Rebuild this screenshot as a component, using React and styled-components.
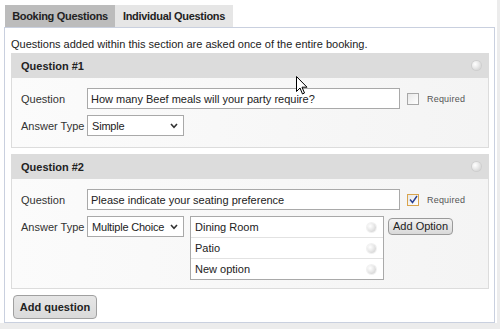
import styled, { createGlobalStyle } from 'styled-components';

const GlobalStyle = createGlobalStyle`
  html, body { margin: 0; padding: 0; background: #ececec; }
  body { font-family: 'Liberation Sans', Arial, sans-serif; font-size: 11px; color: #222; }
`;

const Frame = styled.div`
  position: relative;
  width: 497px;
  height: 323px;
  background: #fff;
  padding: 5px 0 0 4px;
  box-sizing: border-box;
`;

const Tabs = styled.div`
  display: flex;
  margin-left: 1px;
  height: 22px;
`;

const Tab = styled.div`
  display: flex;
  align-items: center;
  justify-content: center;
  width: ${p => p.$w}px;
  font-weight: bold;
  font-size: 11px;
  letter-spacing: -0.3px;
  white-space: nowrap;
  color: #222;
  background: ${p => (p.$active ? '#bcbcbc' : '#e6e6e6')};
`;

const Panel = styled.div`
  width: 491px;
  height: 296px;
  box-sizing: border-box;
  border: 1px solid #c9d0df;
  padding: 0 5px 0 6px;
  display: flex;
  flex-direction: column;
`;

const Intro = styled.p`
  margin: 0;
  padding-top: 9px;
  height: 25px;
  box-sizing: border-box;
  line-height: 14px;
  font-size: 11px;
  white-space: nowrap;
  color: #222;
`;

const Block = styled.div`
  width: 478px;
  margin-bottom: 6px;
`;

const BlockHead = styled.div`
  height: 25px;
  background: #dcdcdc;
  display: flex;
  align-items: center;
  justify-content: space-between;
  padding: 0 8px 0 10px;
  font-weight: bold;
  font-size: 11px;
`;

const Knob = styled.span`
  display: inline-block;
  width: 9px;
  height: 9px;
  border-radius: 50%;
  background: radial-gradient(circle at 35% 35%, #ffffff 0%, #e9e9e9 45%, #c9c9c9 100%);
  box-shadow: 0 0 0 1px rgba(0, 0, 0, 0.06);
`;

const BlockBody = styled.div`
  border: 1px solid #dcdcdc;
  border-top: none;
  background: linear-gradient(90deg, #fbfbfb, #f4f4f4);
  padding: 10px 0 ${p => p.$pb}px 9px;
  display: flex;
  flex-direction: column;
  gap: 6px;
`;

const Row = styled.div`
  display: flex;
  align-items: ${p => (p.$top ? 'flex-start' : 'center')};
`;

const Label = styled.div`
  width: 66px;
  padding-top: ${p => (p.$top ? '5px' : '0')};
  font-size: 11px;
  white-space: nowrap;
  color: #333;
  flex-shrink: 0;
`;

const TextBox = styled.div`
  width: 313px;
  height: 21px;
  box-sizing: border-box;
  border: 1px solid #a9a9a9;
  background: #fff;
  padding: 0 3px;
  display: flex;
  align-items: center;
  font-size: 11px;
  white-space: nowrap;
  color: #222;
`;

const Check = styled.span`
  width: 12px;
  height: 12px;
  box-sizing: border-box;
  margin-left: 7px;
  border: 1px solid ${p => (p.$on ? '#d9a44c' : '#a8a8a8')};
  background: linear-gradient(135deg, #e8e8e8, #ffffff);
  display: flex;
  align-items: center;
  justify-content: center;
`;

const Req = styled.span`
  margin-left: 8px;
  font-size: 9px;
  color: #555;
  letter-spacing: 0.2px;
`;

const Select = styled.div`
  width: 97px;
  height: 21px;
  box-sizing: border-box;
  border: 1px solid #a9a9a9;
  background: #fff;
  display: flex;
  align-items: center;
  justify-content: space-between;
  padding: 0 5px 0 4px;
  font-size: 11px;
  letter-spacing: -0.2px;
  white-space: nowrap;
  color: #222;
  flex-shrink: 0;
`;

const Options = styled.div`
  margin-left: 6px;
  width: 194px;
  box-sizing: border-box;
  border: 1px solid #a9a9a9;
  background: #fff;
`;

const Option = styled.div`
  height: 20px;
  display: flex;
  align-items: center;
  justify-content: space-between;
  padding: 0 7px 0 4px;
  font-size: 11px;
  border-top: ${p => (p.$first ? 'none' : '1px solid #e2e2e2')};
`;

const SmallButton = styled.button`
  margin: 2px 0 0 4px;
  height: 17px;
  padding: 0 4px;
  font-family: 'Liberation Sans', Arial, sans-serif;
  font-size: 11px;
  white-space: nowrap;
  color: #222;
  border: 1px solid #9a9a9a;
  border-radius: 4px;
  background: linear-gradient(#f2f2f2, #d9d9d9);
  line-height: 15px;
`;

const AddButton = styled.button`
  margin: 0 0 0 2px;
  width: 84px;
  height: 24px;
  padding: 0;
  font-family: 'Liberation Sans', Arial, sans-serif;
  font-weight: bold;
  font-size: 11px;
  white-space: nowrap;
  color: #222;
  border: 1px solid #a0a0a0;
  border-radius: 4px;
  background: linear-gradient(#e6e6e6, #dadada);
`;

const Cursor = styled.svg`
  position: absolute;
  left: 296px;
  top: 76px;
`;

const Chevron = () => (
  <svg width="8" height="6" viewBox="0 0 8 6">
    <path d="M1 1 L4 4.3 L7 1" fill="none" stroke="#333" strokeWidth="1.6" />
  </svg>
);

const Tick = () => (
  <svg width="9" height="9" viewBox="0 0 9 9">
    <path d="M1 4.5 L3.5 7.5 L8 1" fill="none" stroke="#2a3f8f" strokeWidth="1.4" />
  </svg>
);

const App = () => (
  <>
    <GlobalStyle />
    <Frame>
      <Tabs>
        <Tab $active $w={110}>Booking Questions</Tab>
        <Tab $w={118}>Individual Questions</Tab>
      </Tabs>
      <Panel>
        <Intro>Questions added within this section are asked once of the entire booking.</Intro>

        <Block>
          <BlockHead>Question #1 <Knob /></BlockHead>
          <BlockBody $pb={11}>
            <Row>
              <Label>Question</Label>
              <TextBox>How many Beef meals will your party require?</TextBox>
              <Check />
              <Req>Required</Req>
            </Row>
            <Row>
              <Label>Answer Type</Label>
              <Select>Simple <Chevron /></Select>
            </Row>
          </BlockBody>
        </Block>

        <Block>
          <BlockHead>Question #2 <Knob /></BlockHead>
          <BlockBody $pb={8}>
            <Row>
              <Label>Question</Label>
              <TextBox>Please indicate your seating preference</TextBox>
              <Check $on><Tick /></Check>
              <Req>Required</Req>
            </Row>
            <Row $top>
              <Label $top>Answer Type</Label>
              <Select>Multiple Choice <Chevron /></Select>
              <Options>
                <Option $first>Dining Room <Knob /></Option>
                <Option>Patio <Knob /></Option>
                <Option>New option <Knob /></Option>
              </Options>
              <SmallButton>Add Option</SmallButton>
            </Row>
          </BlockBody>
        </Block>

        <div>
          <AddButton>Add question</AddButton>
        </div>
      </Panel>
      <Cursor width="12" height="19" viewBox="0 0 12 19">
        <path d="M0.5 0.5 L0.5 15.5 L4 12 L6.5 18 L8.5 17 L6 11.2 L11 11.2 Z" fill="#fff" stroke="#000" strokeWidth="1" />
      </Cursor>
    </Frame>
  </>
);

export default App;
